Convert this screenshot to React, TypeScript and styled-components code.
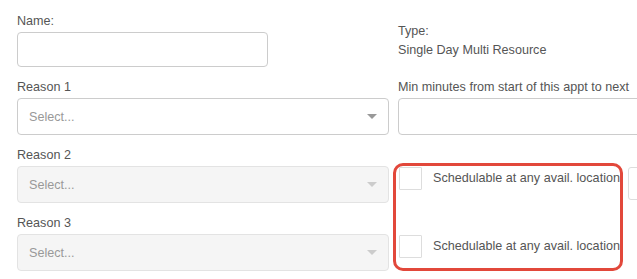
import React from 'react';
import styled, { createGlobalStyle } from 'styled-components';

const GlobalStyle = createGlobalStyle`
  html, body {
    margin: 0;
    padding: 0;
    background: #ffffff;
    overflow: hidden;
  }
  body {
    font-family: "Liberation Sans", Arial, sans-serif;
    font-size: 12.6px;
    color: #555555;
  }
`;

const Form = styled.div`
  box-sizing: border-box;
  display: grid;
  grid-template-columns: 372px 260px;
  grid-auto-rows: auto;
  column-gap: 9px;
  row-gap: 13px;
  padding: 14px 0 0 17px;
  width: 100%;
  overflow: hidden;
`;

const Field = styled.div<{ $row?: number }>`
  display: flex;
  flex-direction: column;
  ${(p) => (p.$row ? `grid-column: 1; grid-row: ${p.$row};` : '')}
`;

const Label = styled.label`
  line-height: 15px;
  margin-bottom: 3px;
  color: #555555;
  white-space: nowrap;
`;

const TextInput = styled.input<{ $width?: number }>`
  box-sizing: border-box;
  width: ${(p) => (p.$width ? `${p.$width}px` : '100%')};
  height: ${(p) => (p.$width ? '35px' : '37px')};
  border: 1px solid #cccccc;
  border-radius: 4px;
  background: #ffffff;
  padding: 0 11px;
  font: inherit;
  outline: none;
`;

const SelectBox = styled.div<{ $disabled?: boolean }>`
  box-sizing: border-box;
  height: 37px;
  display: flex;
  align-items: center;
  justify-content: space-between;
  padding: 0 11px;
  border: 1px solid ${(p) => (p.$disabled ? '#e3e3e3' : '#cccccc')};
  border-radius: 4px;
  background: ${(p) => (p.$disabled ? '#f5f5f5' : '#ffffff')};
`;

const Placeholder = styled.span`
  color: #999999;
`;

const Arrow = styled.span<{ $disabled?: boolean }>`
  width: 0;
  height: 0;
  border-left: 5px solid transparent;
  border-right: 5px solid transparent;
  border-top: 5px solid ${(p) => (p.$disabled ? '#cccccc' : '#999999')};
`;

const TypeInfo = styled.div`
  align-self: center;
  display: flex;
  flex-direction: column;
  gap: 4px;
  line-height: 15px;
`;

const CheckArea = styled.div`
  grid-column: 2;
  grid-row: 3 / span 2;
  display: flex;
  align-items: flex-start;
  margin-top: 15px;
  margin-left: -5px;
`;

const Highlight = styled.div`
  box-sizing: border-box;
  width: 238px;
  border: 3px solid #e2483b;
  border-radius: 10px;
  padding: 1px 0 10px 3px;
  display: flex;
  flex-direction: column;
  gap: 45px;
`;

const CheckRow = styled.label`
  display: flex;
  align-items: center;
  gap: 11px;
  line-height: 15px;
  white-space: nowrap;
  color: #555555;
`;

const CheckBox = styled.span`
  box-sizing: border-box;
  width: 23px;
  height: 23px;
  border: 1px solid #dddddd;
  border-radius: 1px;
  background: #ffffff;
  flex: none;
`;

const CutOff = styled.div`
  box-sizing: border-box;
  width: 40px;
  height: 33px;
  margin: 4px 0 0 5px;
  border: 1px solid #dddddd;
  border-radius: 3px;
  background: #ffffff;
  flex: none;
`;

const Select = ({ disabled }: { disabled?: boolean }) => (
  <SelectBox $disabled={disabled}>
    <Placeholder>Select...</Placeholder>
    <Arrow $disabled={disabled} />
  </SelectBox>
);

const App = () => {
  return (
    <>
      <GlobalStyle />
      <Form>
        <Field>
          <Label>Name:</Label>
          <TextInput $width={251} />
        </Field>
        <TypeInfo>
          <span>Type:</span>
          <span>Single Day Multi Resource</span>
        </TypeInfo>

        <Field>
          <Label>Reason 1</Label>
          <Select />
        </Field>
        <Field>
          <Label>Min minutes from start of this appt to next</Label>
          <TextInput />
        </Field>

        <Field $row={3}>
          <Label>Reason 2</Label>
          <Select disabled />
        </Field>
        <Field $row={4}>
          <Label>Reason 3</Label>
          <Select disabled />
        </Field>

        <CheckArea>
          <Highlight>
            <CheckRow>
              <CheckBox />
              Schedulable at any avail. location
            </CheckRow>
            <CheckRow>
              <CheckBox />
              Schedulable at any avail. location
            </CheckRow>
          </Highlight>
          <CutOff />
        </CheckArea>
      </Form>
    </>
  );
};

export default App;
